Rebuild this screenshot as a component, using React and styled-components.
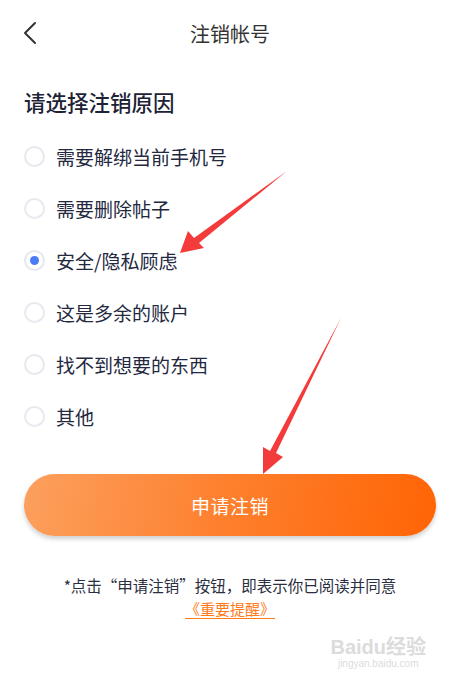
import styled, { createGlobalStyle } from "styled-components"
import { useState } from "react"

const reasons = [
  "需要解绑当前手机号",
  "需要删除帖子",
  "安全/隐私顾虑",
  "这是多余的账户",
  "找不到想要的东西",
  "其他",
]

export default function App() {
  const [selected, setSelected] = useState(2)

  return (
    <Page>
      <GlobalStyle />
      <Header>
        <BackButton aria-label="返回">
          <svg width="16" height="24" viewBox="0 0 16 24">
            <path d="M13 2 L3 12 L13 22" fill="none" stroke="#333" strokeWidth="2" strokeLinecap="round" strokeLinejoin="round" />
          </svg>
        </BackButton>
        <Title>注销帐号</Title>
        <span />
      </Header>

      <Content>
        <SectionTitle>请选择注销原因</SectionTitle>
        <ReasonList>
          {reasons.map((r, i) => (
            <Reason key={r} onClick={() => setSelected(i)}>
              <Radio $checked={selected === i} />
              <span>{r}</span>
            </Reason>
          ))}
        </ReasonList>

        <SubmitButton>申请注销</SubmitButton>

        <Notice>
          <p>*点击“申请注销”按钮，即表示你已阅读并同意</p>
          <NoticeLink href="#">《重要提醒》</NoticeLink>
        </Notice>
      </Content>

      {/* annotation arrows drawn over the screenshot */}
      <Arrows width="460" height="684" viewBox="0 0 460 684">
        <polygon points="287,171 199,243 204,248 180,253 188,231 194,238" fill="#f43b3b" />
        <polygon points="341,318 276,453 283,457 263,474 263,447 270,451" fill="#f43b3b" />
      </Arrows>

      <Watermark>
        <strong>Bai<em>du</em>经验</strong>
        <small>jingyan.baidu.com</small>
      </Watermark>
    </Page>
  )
}

const GlobalStyle = createGlobalStyle`
  body {
    margin: 0;
    background: #fff;
    font-family: "Noto Sans CJK SC", "Noto Sans", sans-serif;
  }
  * { box-sizing: border-box; }
`
const Page = styled.div`
  position: relative;
  width: 460px;
  height: 684px;
  overflow: hidden;
  background: #fff;
`
const Header = styled.header`
  display: grid;
  grid-template-columns: 60px 1fr 60px;
  align-items: center;
  height: 66px;
`
const BackButton = styled.button`
  display: flex;
  align-items: center;
  justify-content: flex-start;
  padding: 0 0 0 22px;
  background: none;
  border: none;
  height: 66px;
`
const Title = styled.h1`
  margin: 0;
  text-align: center;
  font-size: 20px;
  font-weight: 400;
  color: #333;
`
const Content = styled.main`
  padding: 0 24px;
  display: flex;
  flex-direction: column;
`
const SectionTitle = styled.h2`
  margin: 22px 0 0;
  font-size: 21.5px;
  line-height: 28px;
  font-weight: 500;
  color: #1d2236;
`
const ReasonList = styled.ul`
  list-style: none;
  margin: 14px 0 0;
  padding: 0;
`
const Reason = styled.li`
  display: flex;
  align-items: center;
  gap: 11px;
  height: 52px;
  font-size: 19px;
  color: #232840;
  cursor: pointer;
`
const Radio = styled.span`
  flex: none;
  width: 21px;
  height: 21px;
  border-radius: 50%;
  border: 2px solid #e6e9ef;
  display: flex;
  align-items: center;
  justify-content: center;
  &::after {
    content: "";
    width: 9px;
    height: 9px;
    border-radius: 50%;
    background: ${(p) => (p.$checked ? "#4a7cf6" : "transparent")};
  }
`
const SubmitButton = styled.button`
  margin-top: 32px;
  height: 62px;
  border: none;
  border-radius: 31px;
  background: linear-gradient(100deg, #fca05e 0%, #fe7f2c 50%, #ff6405 100%);
  box-shadow: 0 3px 4px rgba(120, 120, 120, 0.35);
  color: #fff;
  font-family: inherit;
  font-size: 19px;
  letter-spacing: 0.5px;
`
const Notice = styled.div`
  margin-top: 37px;
  display: flex;
  flex-direction: column;
  align-items: center;
  p {
    margin: 0;
    font-size: 15.5px;
    line-height: 24px;
    color: #2a2e40;
  }
`
const NoticeLink = styled.a`
  font-size: 15px;
  line-height: 24px;
  color: #ff7a1a;
  text-decoration: underline;
  text-underline-offset: 3px;
`
const Arrows = styled.svg`
  position: absolute;
  left: 0;
  top: 0;
  pointer-events: none;
`
const Watermark = styled.div`
  position: absolute;
  right: 34px;
  bottom: 14px;
  display: flex;
  flex-direction: column;
  align-items: center;
  color: #dcdcdc;
  font-family: "Liberation Sans", "Noto Sans CJK SC", sans-serif;
  strong {
    font-size: 20px;
    font-weight: 700;
    line-height: 22px;
  }
  em {
    font-style: normal;
  }
  small {
    font-size: 10px;
    line-height: 12px;
  }
`
